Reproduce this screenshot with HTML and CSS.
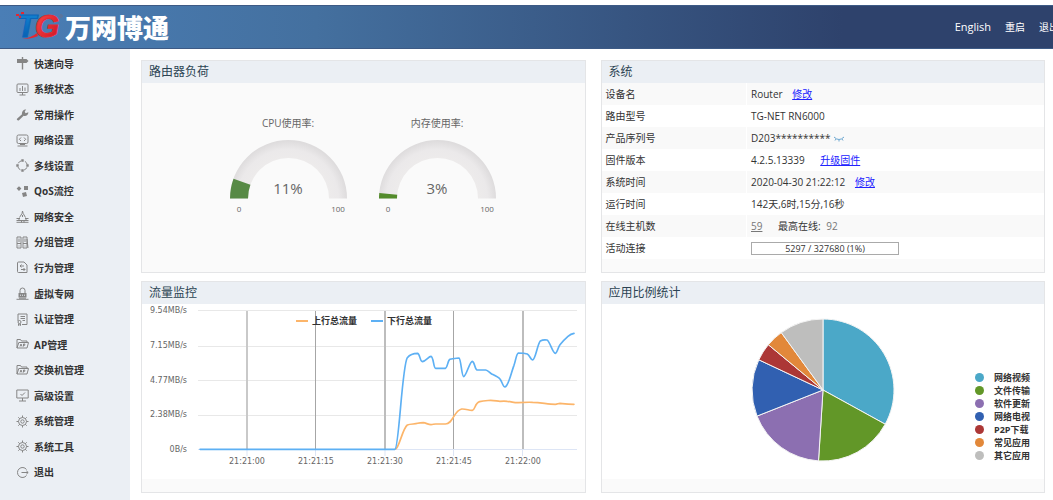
FILE: index.html
```html
<!DOCTYPE html>
<html lang="zh-CN">
<head>
<meta charset="utf-8">
<title>万网博通</title>
<link rel="stylesheet" href="styles.css">
</head>
<body>
<header class="topbar">
  <div class="brand">
    <svg class="brand-mark" width="48" height="32" viewBox="0 0 48 32" role="img" aria-label="TG">
      <defs>
        <linearGradient id="blue" x1="0" y1="0" x2="0" y2="1"><stop offset="0" stop-color="#1488d6"/><stop offset="1" stop-color="#0558ac"/></linearGradient>
        <linearGradient id="red" x1="0" y1="0" x2="1" y2="1"><stop offset="0" stop-color="#ff4a48"/><stop offset="1" stop-color="#c9101f"/></linearGradient>
      </defs>
      <text x="1" y="26" class="mark-letter" fill="url(#blue)" stroke="#0b66ba">T</text>
      <text x="19" y="26" class="mark-letter" fill="url(#red)" stroke="#e22a33">G</text>
      <path d="M6 28 Q15 27 21 22L22 25 Q16 28 6 28Z" fill="#e52630"/>
      <path d="M0 3h3v2H0zM5 1h3v2H5zM3 5h2v2H3z" fill="#e52630"/>
      <circle cx="45" cy="5" r="1.3" fill="none" stroke="#6e6f87" stroke-width=".8"/>
    </svg>
    <span class="brand-name">万网博通</span>
  </div>
  <nav class="toplinks">
    <a class="latin" href="#">English</a>
    <a href="#">重启</a>
    <a href="#">退出</a>
  </nav>
</header>
<div class="layout">
  <nav class="sidebar">
    <a href="#"><svg viewBox="0 0 13 13"><path class="solid" d="M1 2h9.500l2 2-2 2H1zM5.800 0h1.400v12.500H5.800z"/></svg>快速向导</a>
    <a href="#"><svg viewBox="0 0 13 13"><rect x="1" y="1" width="11" height="8.500" rx="1"/><path d="M4 5v3M6.500 3v5M9 4.500V8M6.500 9.500V12M3.500 12h6"/></svg>系统状态</a>
    <a href="#"><svg viewBox="0 0 13 13"><path class="solid" d="M1 10.800 6 6.200C5.500 3.500 7.500 1 10.200 1.500L8.700 3.600l.8 1.600 2.900-.9C12.400 7 10 8.600 7.600 7.800L3 12.300c-1.300.8-2.600-.4-2-1.500z"/></svg>常用操作</a>
    <a href="#"><svg viewBox="0 0 13 13"><rect x="1" y="1" width="11" height="8.500" rx="1.500"/><path d="M5 3.500 3.300 5.300 5 7M8 3.500l1.700 1.800L8 7M1.500 12h10M4 10.500h5"/></svg>网络设置</a>
    <a href="#"><svg viewBox="0 0 13 13"><circle cx="6.500" cy="6.500" r="4.800" stroke-dasharray="3.800 3.740" stroke-dashoffset="-1.900"/><path class="solid" d="M5.300.3h2.400v2.400H5.300zM5.300 10.300h2.400v2.400H5.300zM.3 5.300h2.400v2.400H.3zM10.300 5.300h2.400v2.400h-2.400z"/></svg>多线设置</a>
    <a href="#"><svg viewBox="0 0 13 13"><path class="solid" d="M3 1.200 5.400 3.600 3 6 .6 3.600zM8 1h4v4H8zM6 8l4-1 1 4-4 1z"/></svg>QoS流控</a>
    <a href="#"><svg viewBox="0 0 13 13"><path d="M3.500 7.500 6 3.500 6.500 1l.7 2.500 2.300 4M6.500 5v2M.5 8.500h3.500M9 8.500h3.500M.5 10.500h12M.5 12.300h12M3 8.500v2M10 8.500v2M5.500 10.500v2M8 10.500v2"/></svg>网络安全</a>
    <a href="#"><svg viewBox="0 0 13 13"><path d="M1 1h4v11H1zM7 1h4v11H7zM1 7.500h4M7 7.500h4.500M3 2.500V6M9 2.500V6M2.500 10h1M8.500 10h1M11 3l1 9"/></svg>分组管理</a>
    <a href="#"><svg viewBox="0 0 13 13"><path d="M2.500 1H8l3 3v7.500H2.500Q1.500 11.500 1.500 10.500V2Q1.500 1 2.500 1zM4 5h4M5.500 3.500 4 5l1.500 1.300M9 8.500H5M7.500 7 9 8.500 7.500 10"/></svg>行为管理</a>
    <a href="#"><svg viewBox="0 0 13 13"><path d="M4 6V3.500Q4 1 6.500 1T9 3.500V6M.5 12.300h12"/><rect x="2.500" y="6" width="8" height="4.500" class="solid"/><path d="M3 11.200h7" /><path class="cut" d="M4 8.200h5"/></svg>虚拟专网</a>
    <a href="#"><svg viewBox="0 0 13 13"><path d="M2 8V1h9v10.500H6M4.500 3.500H9M4.500 5.500H9M6.500 7.500H9"/><circle cx="3.500" cy="9" r="1.500"/><path d="M2.500 10.500v2l1-.7 1 .7v-2"/></svg>认证管理</a>
    <a href="#"><svg viewBox="0 0 13 13"><path d="M1 10V1.500h3.500L5.500 3H11v1.500M1 10l1.800-5.500h9.700L11 10zM4 8.500 5 6l1 2.500M7.500 8.500V6h1.300v1.300H7.500"/></svg>AP管理</a>
    <a href="#"><svg viewBox="0 0 13 13"><path d="M1 10V1.500h3.500L5.500 3H11v1.500M1 10l1.800-5.500h9.700L11 10zM4 8.500 5 6l1 2.500M7.500 8.500V6h1.300v1.300H7.500"/></svg>交换机管理</a>
    <a href="#"><svg viewBox="0 0 13 13"><path d="M.8 1h11.400v8H.8zM6.500 9v3M3 12h7M4.500 5 6 6.500 9 3.500"/></svg>高级设置</a>
    <a href="#"><svg viewBox="0 0 13 13"><circle cx="6.500" cy="6.500" r="4"/><circle cx="6.500" cy="6.500" r="1.700"/><path d="M6.500.5v2M6.500 10.500v2M.5 6.500h2M10.500 6.500h2M2.300 2.300l1.400 1.400M9.300 9.300l1.400 1.400M2.300 10.700l1.400-1.400M9.300 3.700l1.400-1.400"/></svg>系统管理</a>
    <a href="#"><svg viewBox="0 0 13 13"><circle cx="6.500" cy="6.500" r="4"/><circle cx="6.500" cy="6.500" r="1.700"/><path d="M6.500.5v2M6.500 10.500v2M.5 6.500h2M10.500 6.500h2M2.300 2.300l1.400 1.400M9.300 9.300l1.400 1.400M2.300 10.700l1.400-1.400M9.300 3.700l1.400-1.400"/></svg>系统工具</a>
    <a href="#"><svg viewBox="0 0 13 13"><path d="M10.500 3.500A5 5 0 1 0 10.500 9.500M5.500 6.500h6.500M10.300 4.800l1.900 1.700-1.900 1.700"/></svg>退出</a>
  </nav>
  <main class="panels">
    <section class="panel">
      <h2>路由器负荷</h2>
      <div class="gauges">
        <svg width="149" height="100" viewBox="0 0 149 100" role="img" aria-label="CPU 11%">
          <defs>
            <radialGradient id="track" gradientUnits="userSpaceOnUse" cx="74" cy="85" r="59">
              <stop offset=".7" stop-color="#edebeb"/><stop offset=".86" stop-color="#ebe9ea"/><stop offset="1" stop-color="#dedcdd"/>
            </radialGradient>
          </defs>
          <text x="74" y="12" class="gauge-label">CPU使用率:</text>
          <path d="M16 83.500A58.500 58.500 0 0 1 133 83.500H115A40.500 40.500 0 0 0 34 83.500Z" fill="url(#track)"/>
          <path d="M16 83.500A58.500 58.500 0 0 1 19.500 63.700L36.400 69.800A40.500 40.500 0 0 0 34 83.500Z" fill="#578a45"/>
          <text x="74" y="79" class="gauge-value">11%</text>
          <text x="25" y="97" class="gauge-limit">0</text>
          <text x="124" y="97" class="gauge-limit">100</text>
        </svg>
        <svg width="149" height="100" viewBox="0 0 149 100" role="img" aria-label="3%">
          <text x="74" y="12" class="gauge-label">内存使用率:</text>
          <path d="M16 83.500A58.500 58.500 0 0 1 133 83.500H115A40.500 40.500 0 0 0 34 83.500Z" fill="url(#track)"/>
          <path d="M16 83.500A58.500 58.500 0 0 1 16.300 78L34.200 79.700A40.500 40.500 0 0 0 34 83.500Z" fill="#538b2b"/>
          <text x="74" y="79" class="gauge-value">3%</text>
          <text x="25" y="97" class="gauge-limit">0</text>
          <text x="124" y="97" class="gauge-limit">100</text>
        </svg>
      </div>
    </section>
    <section class="panel">
      <h2>系统</h2>
      <table class="info">
        <tr><th scope="row">设备名</th><td>Router <a class="gap-s" href="#">修改</a></td></tr>
        <tr><th scope="row">路由型号</th><td>TG-NET RN6000</td></tr>
        <tr><th scope="row">产品序列号</th><td>D203********** <button class="reveal" type="button" aria-label="显示"><svg width="12" height="6" viewBox="0 0 12 6"><path d="M1 1Q6 6 11 1M3 3 2 4.500M6 3.800V5.500M9 3l1 1.500"/></svg></button></td></tr>
        <tr><th scope="row">固件版本</th><td>4.2.5.13339 <a class="gap-l" href="#">升级固件</a></td></tr>
        <tr><th scope="row">系统时间</th><td>2020-04-30 21:22:12 <a class="gap-s" href="#">修改</a></td></tr>
        <tr><th scope="row">运行时间</th><td>142天,6时,15分,16秒</td></tr>
        <tr><th scope="row">在线主机数</th><td><a class="muted" href="#">59</a> <span class="gap-l">最高在线:</span> <span class="muted gap-xs">92</span></td></tr>
        <tr><th scope="row">活动连接</th><td><div class="meter" role="progressbar" aria-valuenow="1">5297 / 327680 (1%)</div></td></tr>
      </table>
    </section>
    <section class="panel">
      <h2>流量监控</h2>
      <div class="chart">
        <svg class="traffic" viewBox="0 0 442 175" preserveAspectRatio="xMinYMid meet">
          <path d="M56 6.500H435M56 42.500H435M56 76.500H435M56 111.500H435" stroke="#e8e8e8"/>
          <path d="M56 145.500H435M105 146v6M173.500 146v6M243 146v6M311.500 146v6M380.500 146v6" stroke="#dde5f5"/>
          <path d="M105 7V145" stroke="#c9c9c9" stroke-width="2"/>
          <path d="M173.500 7V145M311.500 7V145" stroke="#a6a6a6"/>
          <path d="M243 7V145M381 7V145" stroke="#bdbdbd" stroke-width="2"/>
          <g class="series" transform="translate(228 -4) scale(.3333)">
            <path stroke="#fcb56a" d="M77 447C88 442 98 385 112 375C122 371 134 373 143 370C150 368 154 368 160 368C168 369 175 374 183 374C190 374 190 372 197 372H226C250 372 250 333 275 327C288 326 298 332 307 331C316 330 314 309 329 305C340 302 350 302 362 301C375 301 382 304 390 304C400 303 405 303 412 304C425 305 435 309 445 308C460 307 475 306 488 307C515 308 535 313 556 313C562 313 565 310 570 310C580 311 590 313 612 313"/>
            <path stroke="#5db0f4" d="M-510 448H75C87 444 96 198 112 173C120 163 130 160 143 160C150 162 150 185 157 185C168 183 176 169 183 169C191 170 190 205 197 205H226C233 203 233 181 240 178C248 175 258 175 267 174C273 176 275 230 281 230C289 228 299 184 307 184C314 185 314 208 321 210H347C354 211 359 219 365 222C375 227 384 231 390 237C396 244 399 261 405 261C416 258 424 216 432 196C438 179 439 161 445 159C456 159 463 159 472 162C479 165 482 180 488 180C497 178 502 133 511 123C518 119 525 119 531 120C539 122 548 160 556 160C562 159 564 142 570 134C579 123 586 116 594 109C601 103 606 101 612 100"/>
          </g>
          <g class="axis" text-anchor="end">
            <text x="45" y="9">9.54MB/s</text><text x="45" y="44">7.15MB/s</text><text x="45" y="79">4.77MB/s</text><text x="45" y="113">2.38MB/s</text><text x="45" y="148">0B/s</text>
          </g>
          <g class="axis" text-anchor="middle">
            <text x="105" y="160">21:21:00</text><text x="174" y="160">21:21:15</text><text x="243" y="160">21:21:30</text><text x="312" y="160">21:21:45</text><text x="381" y="160">21:22:00</text>
          </g>
          <path d="M154 17H166" stroke="#fcb56a" stroke-width="2"/>
          <text class="key" x="170" y="20">上行总流量</text>
          <path d="M229 17H241" stroke="#5db0f4" stroke-width="2"/>
          <text class="key" x="245" y="20">下行总流量</text>
        </svg>
      </div>
    </section>
    <section class="panel">
      <h2>应用比例统计</h2>
      <div class="chart share">
        <svg width="144" height="144" viewBox="-72 -72 144 144" role="img" aria-label="应用比例统计">
          <g stroke="#f4f4f4" stroke-width="1">
            <path fill="#4ba8c8" d="M0 0V-71A71 71 0 0 1 62.200 34.200Z"/>
            <path fill="#629728" d="M0 0L62.200 34.200A71 71 0 0 1-4.500 70.900Z"/>
            <path fill="#8c6fb1" d="M0 0L-4.500 70.900A71 71 0 0 1-66 26.100Z"/>
            <path fill="#3160b1" d="M0 0L-66 26.100A71 71 0 0 1-64.200-30.200Z"/>
            <path fill="#ac3736" d="M0 0L-64.200-30.200A71 71 0 0 1-54.700-45.300Z"/>
            <path fill="#e2883a" d="M0 0L-54.700-45.300A71 71 0 0 1-41.700-57.400Z"/>
            <path fill="#bebebd" d="M0 0L-41.700-57.400A71 71 0 0 1 0-71Z"/>
          </g>
        </svg>
        <ul class="legend">
          <li class="video">网络视频</li>
          <li class="files">文件传输</li>
          <li class="updates">软件更新</li>
          <li class="tv">网络电视</li>
          <li class="p2p">P2P下载</li>
          <li class="common">常见应用</li>
          <li class="other">其它应用</li>
        </ul>
      </div>
    </section>
  </main>
</div>
</body>
</html>
```
FILE: styles.css
```css
* { box-sizing: border-box; }
body {
  margin: 0;
  padding-top: 5px;
  min-height: 100vh;
  display: flex;
  flex-direction: column;
  background: #fff;
  color: #333;
  font: 10px/14px "Open Sans", "Noto Sans CJK SC", sans-serif;
}
.topbar {
  height: 44px;
  display: flex;
  align-items: center;
  justify-content: space-between;
  overflow: hidden;
  padding-left: 16px;
  background: linear-gradient(90deg, #4a7eb6 0%, #44709f 30%, #2e426c 80%, #2e426c 100%);
  border-top: 1px solid #3d5a85;
  border-bottom: 1px solid #3d5a85;
}
.brand { display: flex; align-items: center; gap: 1px; }
.mark-letter { font: italic bold 31px "Liberation Sans", sans-serif; }
.brand-name { color: #fff; font: 900 26px/36px "Noto Sans CJK SC", sans-serif; }
.toplinks { display: flex; gap: 14px; margin-right: -6px; white-space: nowrap; }
.toplinks a { color: #fff; text-decoration: none; }
.toplinks .latin { font-size: 11px; }
.layout { flex: 1; display: grid; grid-template-columns: 130px 1fr; }
.sidebar {
  display: grid;
  grid-auto-rows: 1fr;
  padding: 2px 0 15px 16px;
  background: #ebeff4;
}
.sidebar a {
  display: flex;
  align-items: center;
  gap: 5px;
  color: #333;
  font-weight: bold;
  text-decoration: none;
}
.sidebar svg { width: 13px; height: 13px; fill: none; stroke: #858585; stroke-width: 1; }
.sidebar .solid { fill: #858585; stroke: none; }
.sidebar .cut { stroke: #ebeff4; stroke-dasharray: 1 1; }
.panels {
  display: grid;
  grid-template: 1fr 1fr / 1fr 1fr;
  gap: 8px 15px;
  padding: 11px 8px 7px 11px;
}
.panel { min-width: 0; background: #fafafa; border: 1px solid #e4e5e7; }
.panel h2 {
  margin: 0;
  padding: 0 7px;
  background: #ebeff4;
  color: #2c4453;
  font-size: 12px;
  font-weight: normal;
  line-height: 22px;
}
.gauges { display: flex; justify-content: center; padding-top: 32px; }
.gauges text { text-anchor: middle; fill: #666; }
.gauge-label { font-size: 10px; }
.gauge-value { font-size: 15px; }
.gauge-limit { font-size: 8px; }
.info { width: 100%; border-collapse: collapse; }
.info tr { height: 22px; background: #f9f9f9; }
.info tr:nth-child(even) { background: #fff; }
.info th { width: 145px; padding: 0 4px; text-align: left; font-weight: normal; border-right: 1px solid #fff; }
.info td { padding: 0 4px; }
.info a { color: #22f; }
.info .muted { color: #777; }
.gap-xs { margin-left: 3px; }
.gap-s { margin-left: 7px; }
.gap-l { margin-left: 13px; }
.reveal { padding: 0; border: 0; background: none; }
.reveal svg { display: block; fill: none; stroke: #6ba6d0; }
.meter {
  width: 148px;
  border: 1px solid #aaa;
  background: #fff;
  font-size: 9px;
  line-height: 11px;
  text-align: center;
}
.chart { height: 175px; background: #fff; }
.traffic { display: block; width: 100%; height: 175px; fill: none; }
.series { stroke-width: 5; stroke-linecap: round; stroke-linejoin: round; }
.axis { fill: #666; font: 8px "DejaVu Sans", sans-serif; }
.key { fill: #333; font-size: 9px; font-weight: bold; }
.share { display: grid; grid-template-columns: 1fr auto 1fr; align-items: center; padding-bottom: 3px; }
.share svg { grid-column: 2; }
.legend {
  margin: 0;
  padding: 0 14px 14px 0;
  justify-self: end;
  align-self: end;
  list-style: none;
  font-size: 9px;
  font-weight: bold;
  line-height: 13px;
}
.legend li { display: flex; align-items: center; gap: 10px; }
.legend li::before { content: ""; width: 9px; height: 9px; border-radius: 50%; background: var(--dot); }
.video { --dot: #4ba8c8; }
.files { --dot: #629728; }
.updates { --dot: #8c6fb1; }
.tv { --dot: #3160b1; }
.p2p { --dot: #ac3736; }
.common { --dot: #e2883a; }
.other { --dot: #bebebd; }
```
